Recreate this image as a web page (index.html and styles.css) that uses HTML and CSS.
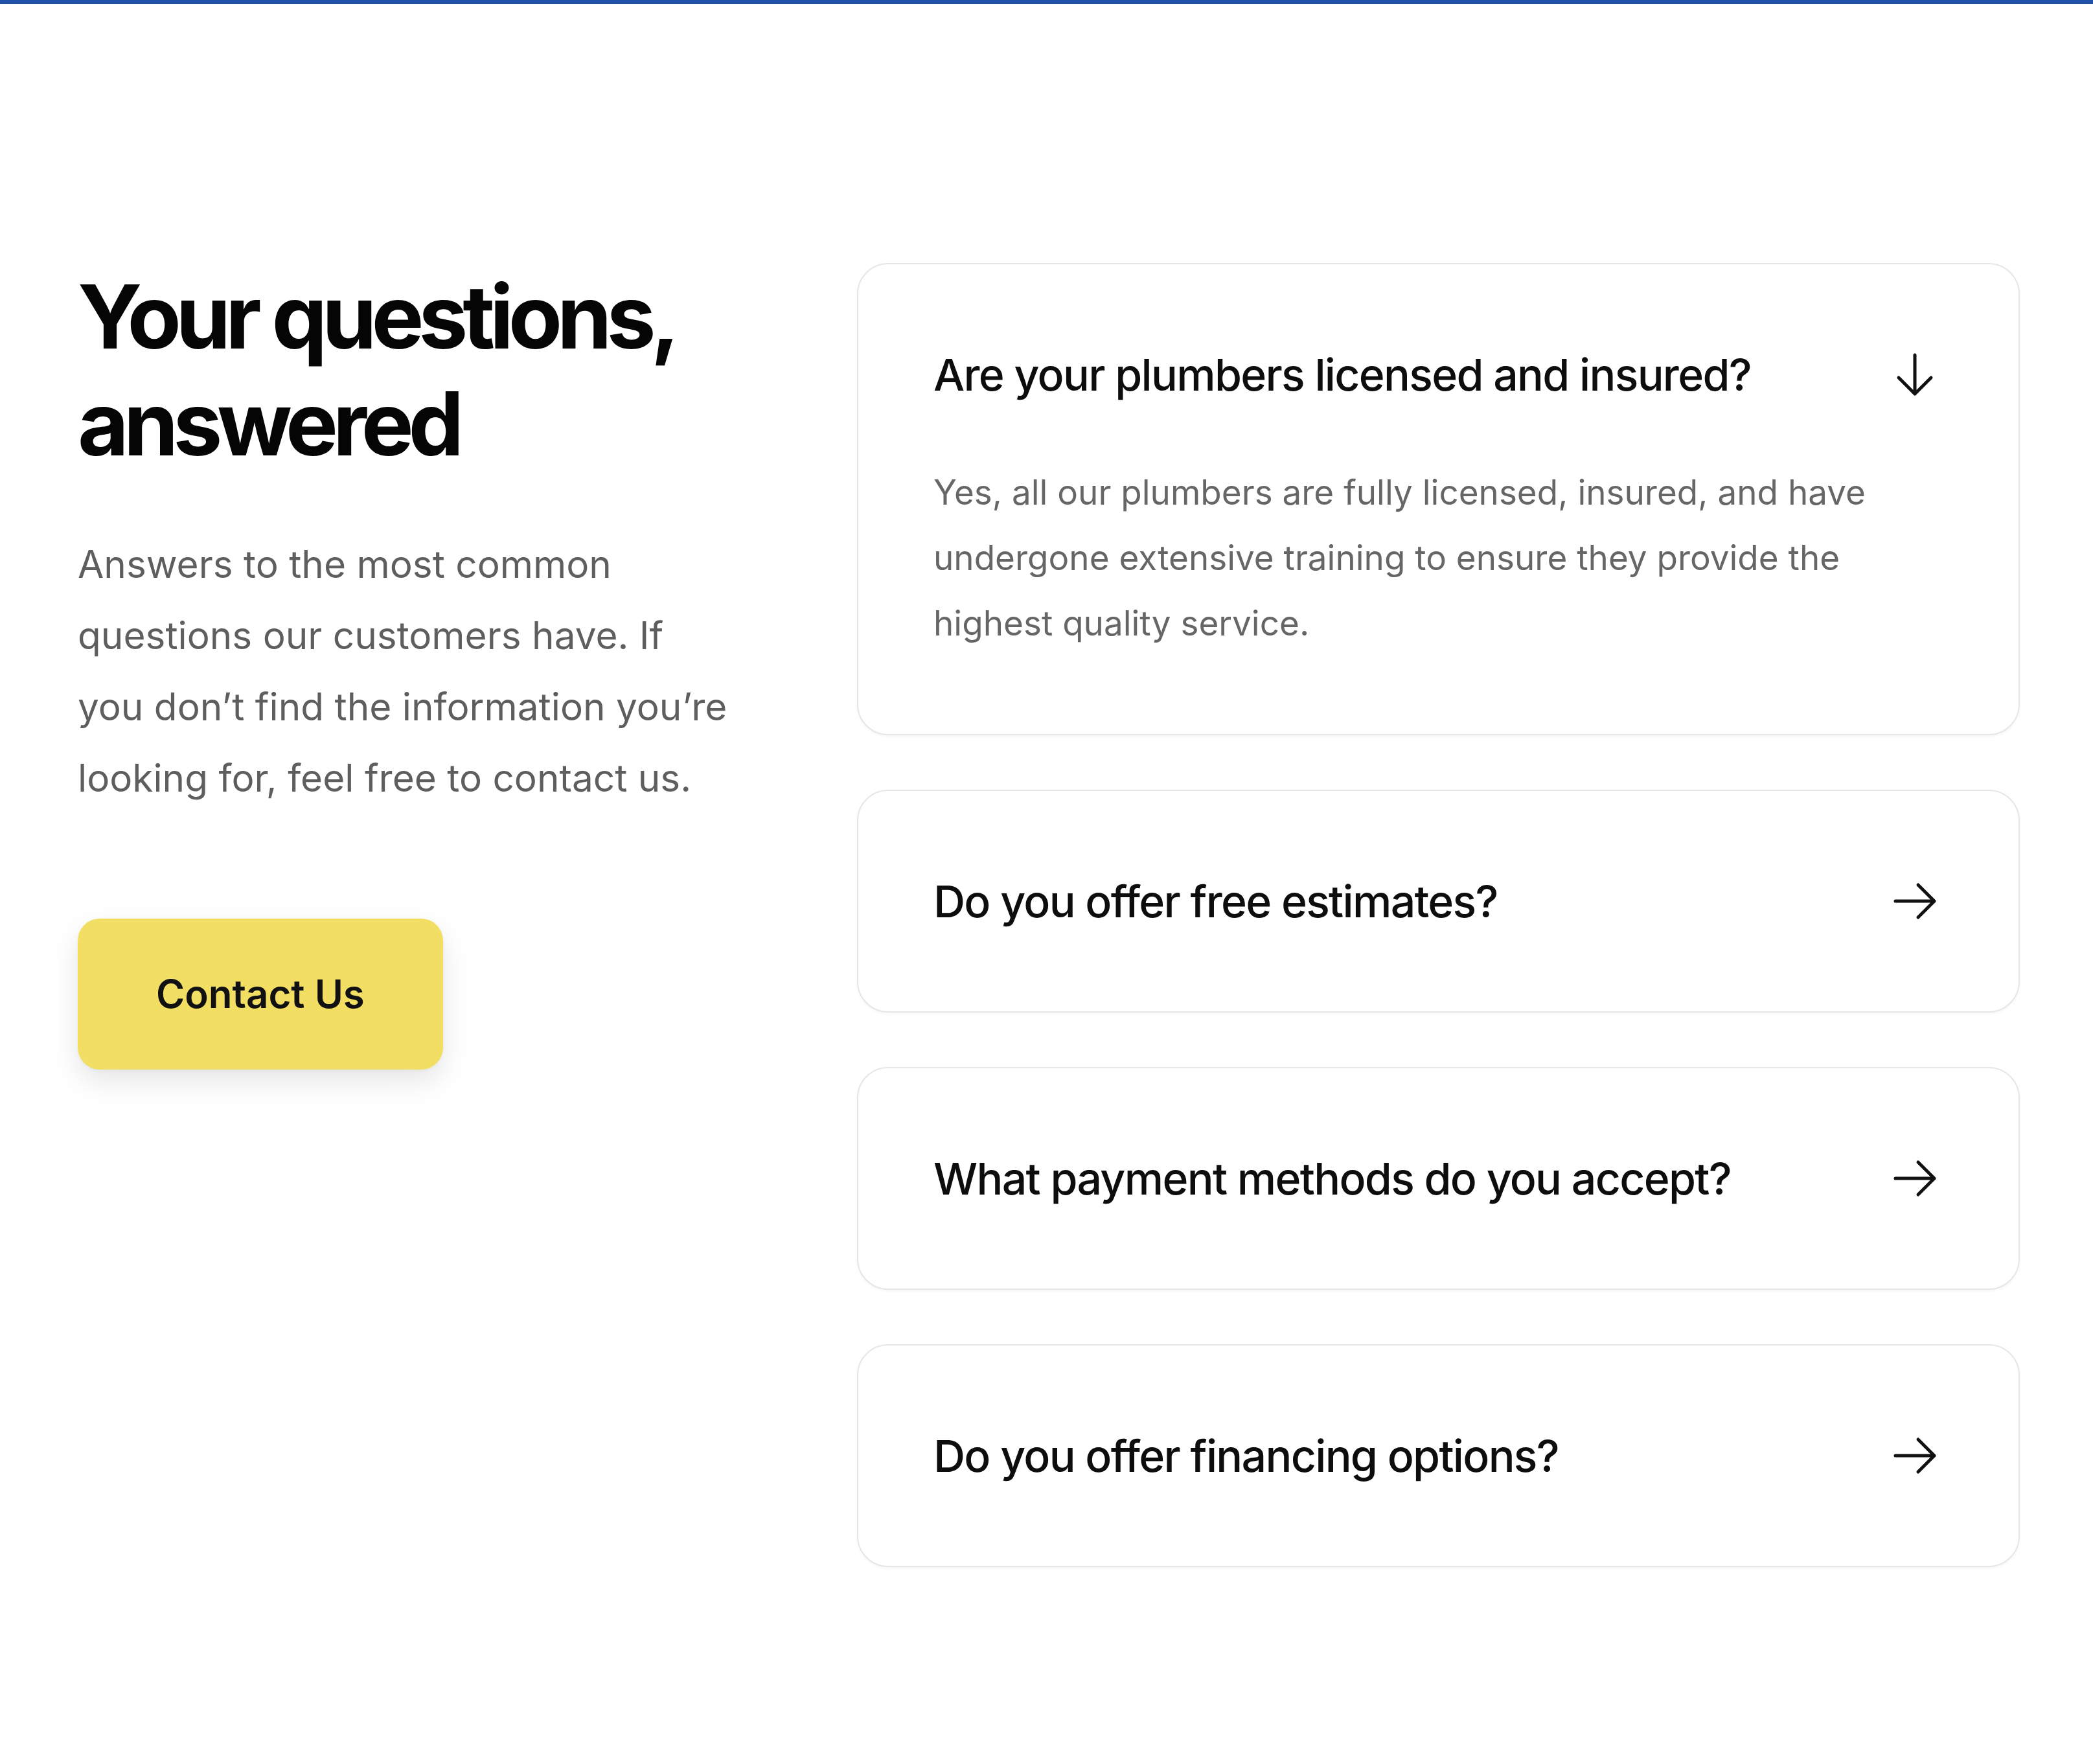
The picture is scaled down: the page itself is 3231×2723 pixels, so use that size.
FILE: index.html
```html
<!DOCTYPE html>
<html lang="en">
<head>
<meta charset="utf-8">
<title>FAQ</title>
<link rel="stylesheet" href="styles.css">
</head>
<body>
<div class="topbar"></div>
<section class="faq">
  <div class="faq-intro">
    <h2 class="faq-title">Your questions, answered</h2>
    <p class="faq-lead">Answers to the most common<br>questions our customers have. If<br>you don’t find the information you’re<br>looking for, feel free to contact us.</p>
    <a class="btn-contact" href="#">Contact Us</a>
  </div>
  <div class="faq-list">
    <div class="faq-item">
      <div class="faq-q">
        <span class="faq-q-text">Are your plumbers licensed and insured?</span>
        <svg class="faq-icon" viewBox="0 0 24 24" fill="none" stroke="currentColor" stroke-width="1.5" stroke-linecap="round" stroke-linejoin="round"><path d="M19.5 13.5 12 21m0 0-7.5-7.5M12 21V3"/></svg>
      </div>
      <p class="faq-a">Yes, all our plumbers are fully licensed, insured, and have undergone extensive training to ensure they provide the highest quality service.</p>
    </div>
    <div class="faq-item">
      <div class="faq-q">
        <span class="faq-q-text">Do you offer free estimates?</span>
        <svg class="faq-icon" viewBox="0 0 24 24" fill="none" stroke="currentColor" stroke-width="1.5" stroke-linecap="round" stroke-linejoin="round"><path d="M13.5 4.5 21 12m0 0-7.5 7.5M21 12H3"/></svg>
      </div>
    </div>
    <div class="faq-item">
      <div class="faq-q">
        <span class="faq-q-text">What payment methods do you accept?</span>
        <svg class="faq-icon" viewBox="0 0 24 24" fill="none" stroke="currentColor" stroke-width="1.5" stroke-linecap="round" stroke-linejoin="round"><path d="M13.5 4.5 21 12m0 0-7.5 7.5M21 12H3"/></svg>
      </div>
    </div>
    <div class="faq-item">
      <div class="faq-q">
        <span class="faq-q-text">Do you offer financing options?</span>
        <svg class="faq-icon" viewBox="0 0 24 24" fill="none" stroke="currentColor" stroke-width="1.5" stroke-linecap="round" stroke-linejoin="round"><path d="M13.5 4.5 21 12m0 0-7.5 7.5M21 12H3"/></svg>
      </div>
    </div>
  </div>
</section>
</body>
</html>
```

FILE: styles.css
```css
html, body {
  margin: 0;
  padding: 0;
  background: #ffffff;
}

body {
  font-family: "Inter", "Liberation Sans", sans-serif;
  color: #0d0d0d;
}

.topbar {
  height: 6px;
  background: #1f52a5;
}

.faq {
  display: grid;
  grid-template-columns: 1083px 1795px;
  column-gap: 120px;
  align-items: start;
  padding: 400px 113px 300px 120px;
}

.faq-intro {
  display: flex;
  flex-direction: column;
  align-items: flex-start;
}

.faq-title {
  margin: 0;
  font-size: 136px;
  line-height: 165px;
  font-weight: 700;
  letter-spacing: -0.06em;
  color: #050505;
}

.faq-lead {
  margin: 80px 0 0;
  font-size: 58.5px;
  line-height: 110px;
  font-weight: 400;
  color: #5e5e5e;
}

.btn-contact {
  margin-top: 162px;
  display: inline-block;
  padding: 83px 121px;
  line-height: 67px;
  font-size: 60px;
  font-weight: 600;
  color: #111111;
  text-decoration: none;
  background: #f2de62;
  border-radius: 34px;
  box-shadow: 0 18px 44px rgba(0, 0, 0, 0.10), 0 2px 6px rgba(0, 0, 0, 0.04);
}

.faq-list {
  display: flex;
  flex-direction: column;
  gap: 84px;
}

.faq-item {
  border: 2px solid #e6e6e6;
  border-radius: 48px;
  padding: 120px 120px 120px 116px;
  background: #ffffff;
  box-shadow: 0 2px 4px rgba(0, 0, 0, 0.04);
}

.faq-q {
  display: flex;
  align-items: center;
  justify-content: space-between;
  gap: 40px;
}

.faq-q-text {
  font-size: 68px;
  line-height: 100px;
  font-weight: 500;
  letter-spacing: -0.025em;
  color: #0d0d0d;
}

.faq-icon {
  width: 80px;
  height: 80px;
  flex: none;
  color: #111111;
}

.faq-a {
  margin: 82px 0 0;
  font-size: 53px;
  line-height: 101px;
  font-weight: 400;
  color: #666666;
}
```
